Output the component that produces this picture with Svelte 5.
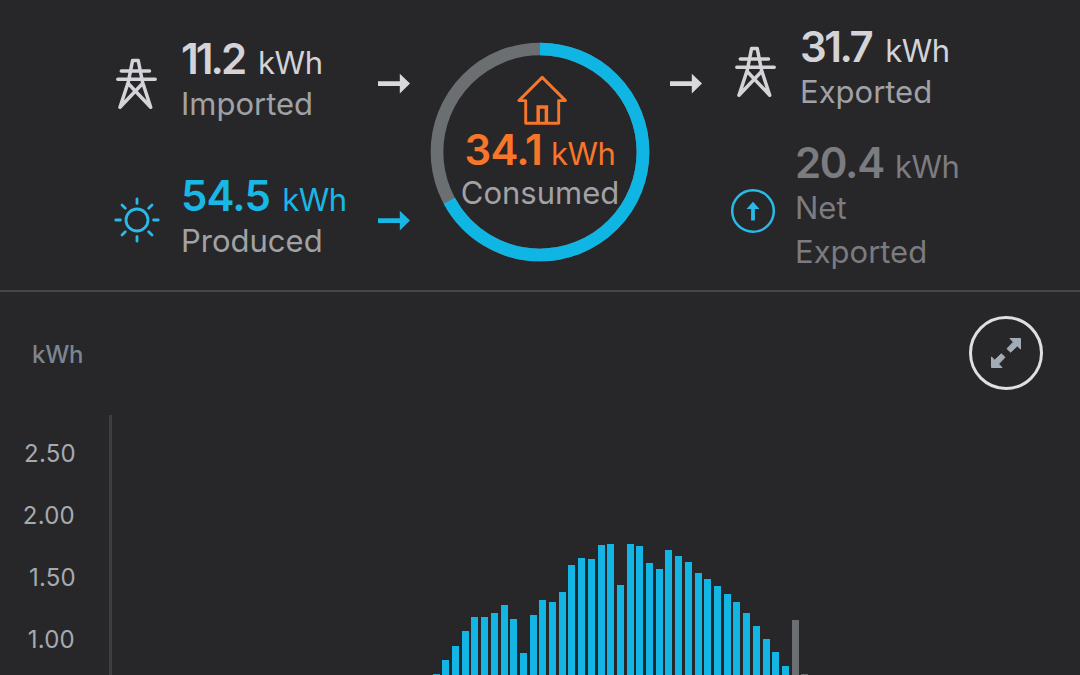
<script>
  const bars = [
    1, 15, 29.5, 44, 58, 58.5, 62, 70, 56, 22, 60, 75, 73, 83, 110, 117, 116, 130, 131.5, 90.5,
    131.5, 129, 112, 106, 125.5, 119, 113, 102.5, 96, 89, 81.5, 73, 62, 49.5, 36.5, 23, 9
  ].map((height) => ({ height, source: 'solar' }));

  bars.push({ height: 55, source: 'grid' }, { height: 1, source: 'grid' });

  const ticks = ['2.50', '2.00', '1.50', '1.00'];

  const consumed = 34.1;
  const imported = 11.2;
  const solarShare = ((consumed - imported) / consumed) * 100;
</script>

{#snippet pylon()}
  <svg class="pylon" width="42" height="52" viewBox="0 0 42 52">
    <path d="M4 49.2 12.3 24 16.6 2.4h5.6L26.5 24l8.2 25.2M5.3 13.1h28.2M1.8 21.3h37.4M12 25.2 34.7 49.2M26.8 25.2 4 49.2" />
  </svg>
{/snippet}

{#snippet arrow(color)}
  <svg class="arrow {color}" width="34" height="22" viewBox="0 0 34 22">
    <path d="M1 8.2h21.8V.8L33 10.6 22.8 20.4V13H1z" />
  </svg>
{/snippet}

<main>
  <section class="summary">
    <div class="column sources">
      <div class="stat imported">
        {@render pylon()}
        <div class="text">
          <div class="value"><b>11.2</b><span class="unit">kWh</span></div>
          <div class="label">Imported</div>
        </div>
      </div>
      <div class="stat produced">
        <svg class="sun" width="46" height="46" viewBox="-23 -23 46 46">
          <circle r="11" />
          <path d="M0-21.2v4.6M0 21.2v-4.6M-21.2 0h4.6M21.2 0h-4.6M-15-15l3.3 3.3M15-15l-3.3 3.3M-15 15l3.3-3.3M15 15l-3.3-3.3" />
        </svg>
        <div class="text">
          <div class="value"><b>54.5</b><span class="unit">kWh</span></div>
          <div class="label">Produced</div>
        </div>
      </div>
    </div>

    <div class="arrows in">
      {@render arrow('light')}
      {@render arrow('cyan')}
    </div>

    <div class="ring">
      <svg class="dial" width="220" height="220" viewBox="-110 -110 220 220">
        <circle class="track" r="103" />
        <circle
          class="share"
          r="103"
          pathLength="100"
          stroke-dasharray="{solarShare} 100"
          transform="rotate(-90)"
        />
      </svg>
      <div class="consumed">
        <svg class="house" width="50" height="51" viewBox="0 0 50 51">
          <path d="M25.2 2.4 1.9 25.6h6.8v22.7h33V25.6h6.8z" />
          <path class="door" d="M21.2 48.3V32h8.2v16.3" />
        </svg>
        <div class="value"><b>34.1</b><span class="unit">kWh</span></div>
        <div class="label">Consumed</div>
      </div>
    </div>

    <div class="arrows out">
      {@render arrow('light')}
    </div>

    <div class="column sinks">
      <div class="stat exported">
        {@render pylon()}
        <div class="text">
          <div class="value"><b>31.7</b><span class="unit">kWh</span></div>
          <div class="label">Exported</div>
        </div>
      </div>
      <div class="stat net">
        <svg class="up" width="46" height="46" viewBox="-23 -23 46 46">
          <circle r="20.8" />
          <path d="M0-9.2 6.5-2H1.9V9.5h-3.8V-2h-4.6z" />
        </svg>
        <div class="text">
          <div class="value"><b>20.4</b><span class="unit">kWh</span></div>
          <div class="label">Net<br />Exported</div>
        </div>
      </div>
    </div>
  </section>

  <section class="chart">
    <header>
      <span class="axis-title">kWh</span>
      <button class="expand" aria-label="Expand chart">
        <svg width="32" height="32" viewBox="0 0 32 32">
          <path d="M20 1.5H30.5V12L27.3 8.9 20.7 15.2 17 11.7 23.4 5zM12 30.5H1.5V20L4.7 23.1 11.3 16.8 15 20.3 8.6 27z" />
        </svg>
      </button>
    </header>
    <div class="plot">
      <div class="ticks">
        {#each ticks as tick}
          <span class:shifted={tick.endsWith('00')}>{tick}</span>
        {/each}
      </div>
      <div class="bars">
        {#each bars as bar}
          <div class="bar {bar.source}" style="height: {bar.height}px"></div>
        {/each}
      </div>
    </div>
  </section>
</main>

<style>
  :global(body) {
    background: #272729;
    overflow: hidden;
  }

  main {
    width: 1080px;
    height: 675px;
    overflow: hidden;
    background: #272729;
    color: #d3d3d8;
    font-family: Inter, 'Liberation Sans', sans-serif;
  }

  svg {
    display: block;
    flex: none;
    fill: none;
  }

  .summary {
    display: grid;
    grid-template-columns: 263px 53px 220px 81px 1fr;
    box-sizing: border-box;
    height: 292px;
    padding-left: 114px;
    border-bottom: 2px solid #45454b;
  }

  .stat {
    display: flex;
  }

  .value {
    display: flex;
    align-items: baseline;
    height: 44px;
    line-height: 42px;
    white-space: nowrap;
  }

  .value b {
    font-size: 42px;
    font-weight: 600;
  }

  .unit {
    margin-left: 9px;
    font-size: 31px;
    letter-spacing: -0.5px;
  }

  .label {
    font-size: 31px;
    line-height: 44px;
    color: #a1a2a6;
  }

  .sources {
    padding-top: 38px;
  }

  .stat.imported {
    height: 137px;
  }

  .imported .pylon {
    margin: 20px 23px 0 2px;
  }

  .imported b {
    letter-spacing: -3px;
  }

  .imported .unit {
    margin-left: 14px;
  }

  .sun {
    margin: 22px 21px 0 0;
    stroke: #2bb9e8;
    stroke-width: 2.8;
    stroke-linecap: round;
  }

  .produced .value {
    color: #19b7e6;
  }

  .produced b {
    letter-spacing: -0.8px;
  }

  .produced .unit {
    margin-left: 12px;
  }

  .pylon {
    stroke: #d3d3d8;
    stroke-width: 3.5;
    stroke-linecap: round;
    stroke-linejoin: round;
  }

  .arrows {
    display: flex;
    flex-direction: column;
    gap: 115px;
    padding-top: 73px;
  }

  .arrows.out {
    padding-left: 19px;
  }

  .arrow.light {
    fill: #d9d9dc;
  }

  .arrow.cyan {
    fill: #19b7e6;
  }

  .ring {
    display: grid;
    align-self: start;
    margin-top: 42px;
  }

  .dial,
  .consumed {
    grid-area: 1 / 1;
  }

  .dial circle {
    stroke-width: 12.7;
  }

  .track {
    stroke: #6b6f72;
  }

  .share {
    stroke: #0fb6e4;
  }

  .consumed {
    display: flex;
    flex-direction: column;
    align-items: center;
    padding-top: 33px;
  }

  .house {
    margin-left: 4px;
    stroke: #f8762a;
    stroke-width: 2.9;
    stroke-linejoin: round;
  }

  .door {
    stroke-width: 3.5;
    stroke-linejoin: miter;
  }

  .consumed .value {
    height: 42px;
    margin-top: 3px;
    color: #f8762a;
  }

  .consumed b {
    letter-spacing: -0.8px;
  }

  .sinks {
    padding-top: 26px;
  }

  .stat.exported {
    height: 116px;
  }

  .exported .pylon {
    margin: 20px 23px 0 4px;
  }

  .exported b {
    letter-spacing: -2.5px;
  }

  .exported .unit {
    margin-left: 14px;
  }

  .up {
    margin: 46px 19px 0 -1px;
  }

  .up circle {
    stroke: #2bb9e8;
    stroke-width: 2.5;
  }

  .up path {
    fill: #2bb9e8;
  }

  .net .value,
  .net .label {
    color: #7b7b80;
  }

  .net b {
    letter-spacing: -1.3px;
  }

  .net .unit {
    margin-left: 11px;
  }

  header {
    display: flex;
    justify-content: space-between;
    height: 123px;
    padding: 0 37px 0 32px;
  }

  .axis-title {
    padding-top: 48px;
    font-size: 24px;
    font-weight: 500;
    line-height: 30px;
    letter-spacing: -0.2px;
    color: #7c8590;
  }

  .expand {
    display: grid;
    place-items: center;
    box-sizing: border-box;
    width: 74px;
    height: 74px;
    margin-top: 24px;
    padding: 0;
    border: 3px solid #dfdfe1;
    border-radius: 50%;
    background: none;
  }

  .expand path {
    fill: #a3acb4;
    stroke: #a3acb4;
    stroke-linejoin: round;
  }

  .plot {
    display: flex;
    height: 260px;
  }

  .ticks {
    display: flex;
    flex-direction: column;
    align-items: flex-end;
    width: 76px;
    padding: 8px 33px 0 0;
    font-size: 24px;
    line-height: 62px;
    letter-spacing: 0.25px;
    color: #a5aab0;
  }

  .ticks span.shifted {
    margin-right: 1px;
  }

  .bars {
    display: flex;
    align-items: flex-end;
    gap: 2.71px;
    flex: 1;
    padding-left: 320.6px;
    border-left: 3px solid #3d3d44;
  }

  .bar {
    width: 7px;
  }

  .solar {
    background: #13b5e4;
  }

  .grid {
    background: #6b6f72;
  }
</style>
